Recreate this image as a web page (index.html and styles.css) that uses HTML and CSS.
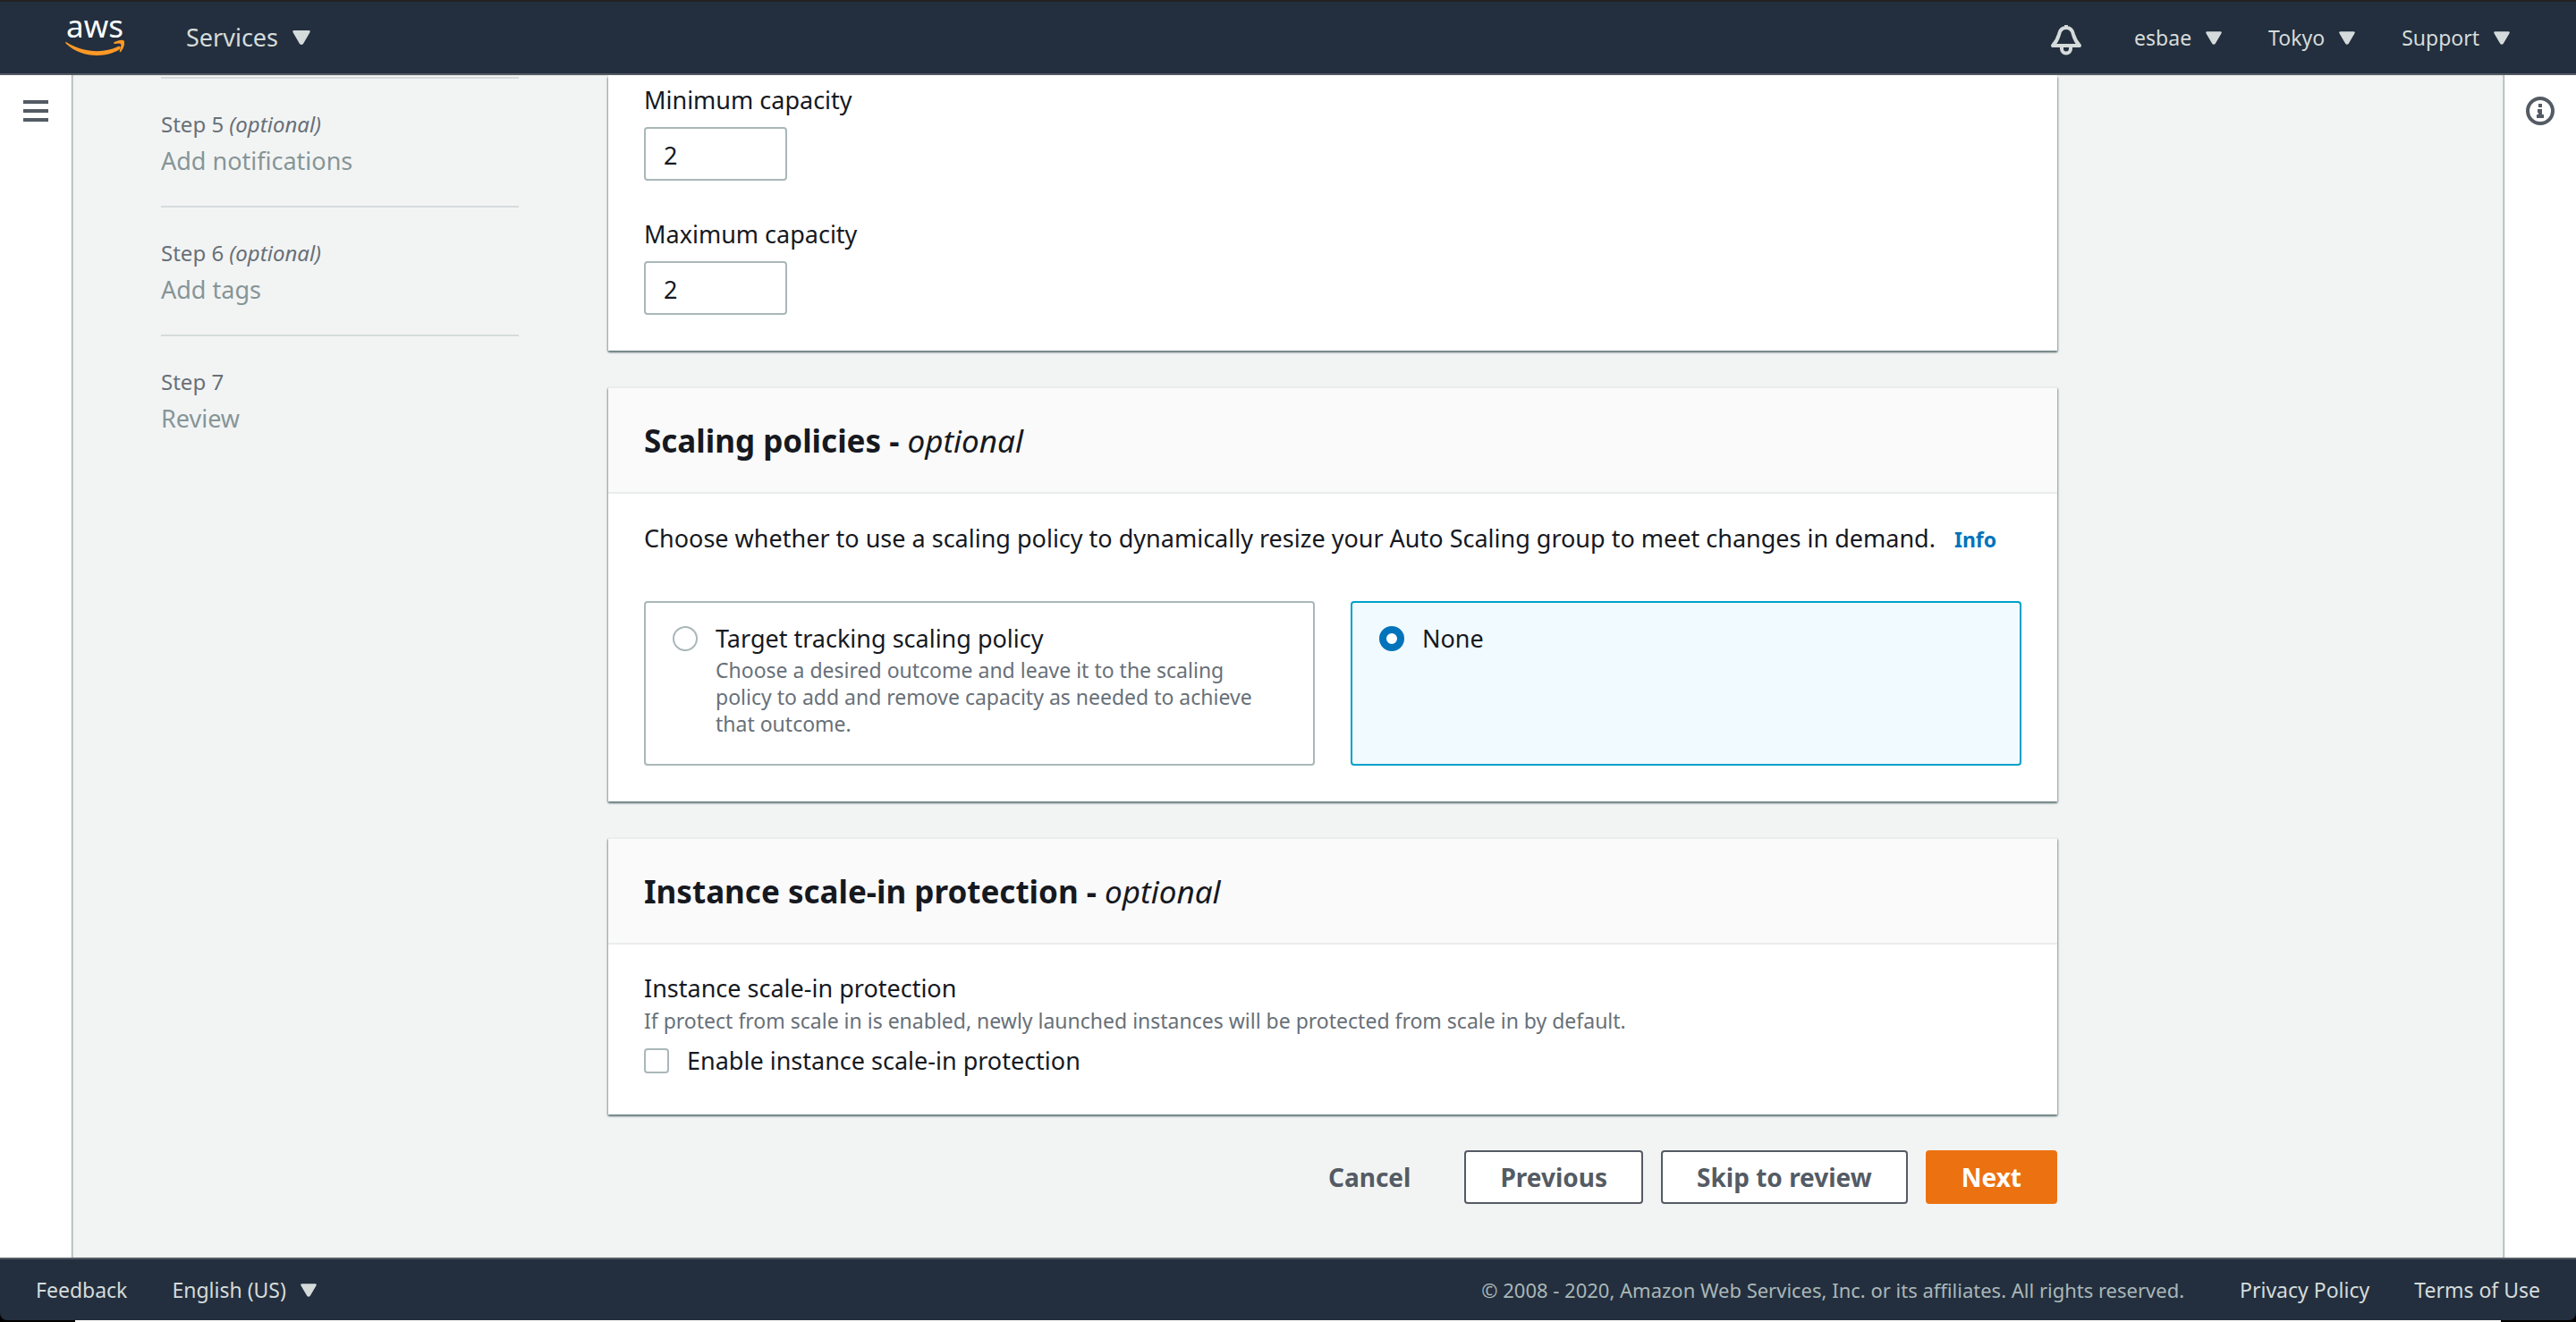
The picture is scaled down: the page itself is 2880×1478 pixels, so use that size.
FILE: index.html
```html
<!DOCTYPE html>
<html lang="en">
<head>
<meta charset="utf-8">
<meta name="viewport" content="width=device-width, initial-scale=1">
<title>Create Auto Scaling group</title>
<link rel="stylesheet" href="styles.css">
</head>
<body>
<header class="topnav">
  <a class="logo" href="#" aria-label="AWS home">
    <span class="logo-word">aws</span>
    <svg class="logo-smile" viewBox="0 0 66 20" aria-hidden="true"><path d="M1 3C20 15 43 16 59 8c2-1 4 1 2 3C44 22 17 20 1 5c-1-1-1-3 0-2z"/><path d="M55 3q9-4 11-1q1 6-4 12q-2 1-1-2q2-5 1-7q-2-1-7 0q-2-1 0-2z"/></svg>
  </a>
  <button class="menu menu-lg" type="button">Services <svg class="caret" viewBox="0 0 20 16" aria-hidden="true"><path d="M2 0h16q3 0 1 3l-7 12q-2 2-4 0L1 3q-2-3 1-3z"/></svg></button>
  <div class="topnav-right">
    <button class="bell" type="button" aria-label="Notifications"><svg viewBox="0 0 36 36" aria-hidden="true"><path d="M18 2v3M3 25h30c-5-5-6-9-7-12.500C25 7.500 22 5 18 5s-7 2.500-8 7.500C9 16 8 20 3 25zM13 26v2.500a5 5 0 0 0 10 0V26"/></svg></button>
    <button class="menu" type="button">esbae <svg class="caret" viewBox="0 0 20 16" aria-hidden="true"><path d="M2 0h16q3 0 1 3l-7 12q-2 2-4 0L1 3q-2-3 1-3z"/></svg></button>
    <button class="menu" type="button">Tokyo <svg class="caret" viewBox="0 0 20 16" aria-hidden="true"><path d="M2 0h16q3 0 1 3l-7 12q-2 2-4 0L1 3q-2-3 1-3z"/></svg></button>
    <button class="menu" type="button">Support <svg class="caret" viewBox="0 0 20 16" aria-hidden="true"><path d="M2 0h16q3 0 1 3l-7 12q-2 2-4 0L1 3q-2-3 1-3z"/></svg></button>
  </div>
</header>
<div class="workspace">
  <aside class="rail">
    <button class="rail-button" type="button" aria-label="Open navigation"><svg viewBox="0 0 32 32" aria-hidden="true"><path d="M2 6h28M2 16h28M2 26h28" stroke-width="4"/></svg></button>
  </aside>
  <main class="wizard">
    <nav class="steps" aria-label="Steps">
      <ol class="step-list">
        <li class="step"><span class="step-no">Step 5 <i>(optional)</i></span><span class="step-name">Add notifications</span></li>
        <li class="step"><span class="step-no">Step 6 <i>(optional)</i></span><span class="step-name">Add tags</span></li>
        <li class="step"><span class="step-no">Step 7</span><span class="step-name">Review</span></li>
      </ol>
    </nav>
    <form class="form">
      <section class="card card-continued">
        <div class="field">
          <label class="label" for="min">Minimum capacity</label>
          <input class="input" id="min" type="text" inputmode="numeric" value="2">
        </div>
        <div class="field">
          <label class="label" for="max">Maximum capacity</label>
          <input class="input" id="max" type="text" inputmode="numeric" value="2">
        </div>
      </section>
      <section class="card">
        <h2 class="card-title">Scaling policies - <i>optional</i></h2>
        <div class="card-body">
          <p class="lead">Choose whether to use a scaling policy to dynamically resize your Auto Scaling group to meet changes in demand. <a class="info" href="#">Info</a></p>
          <div class="tiles">
            <label class="tile">
              <input class="radio" type="radio" name="policy">
              <span class="tile-text"><span class="tile-name">Target tracking scaling policy</span><span class="hint">Choose a desired outcome and leave it to the scaling policy to add and remove capacity as needed to achieve that outcome.</span></span>
            </label>
            <label class="tile tile-selected">
              <input class="radio" type="radio" name="policy" checked>
              <span class="tile-text"><span class="tile-name">None</span></span>
            </label>
          </div>
        </div>
      </section>
      <section class="card">
        <h2 class="card-title">Instance scale-in protection - <i>optional</i></h2>
        <div class="card-body">
          <div class="protection-name">Instance scale-in protection</div>
          <div class="hint">If protect from scale in is enabled, newly launched instances will be protected from scale in by default.</div>
          <label class="check"><input class="checkbox" type="checkbox">Enable instance scale-in protection</label>
        </div>
      </section>
      <div class="actions">
        <button class="btn btn-link" type="button">Cancel</button>
        <button class="btn" type="button">Previous</button>
        <button class="btn" type="button">Skip to review</button>
        <button class="btn btn-primary" type="button">Next</button>
      </div>
    </form>
  </main>
  <aside class="rail">
    <button class="rail-button" type="button" aria-label="Info"><svg viewBox="0 0 32 32" aria-hidden="true"><circle cx="16" cy="16" r="14" stroke-width="4"/><path d="M16 8v4M13 16h5M16 14v8M12 22h8" stroke-width="4"/></svg></button>
  </aside>
</div>
<div class="footer-edge">
  <footer class="footer">
    <a class="footer-link" href="#">Feedback</a>
    <button class="menu" type="button">English (US) <svg class="caret" viewBox="0 0 20 16" aria-hidden="true"><path d="M2 0h16q3 0 1 3l-7 12q-2 2-4 0L1 3q-2-3 1-3z"/></svg></button>
    <span class="copyright">© 2008 - 2020, Amazon Web Services, Inc. or its affiliates. All rights reserved.</span>
    <a class="footer-link" href="#">Privacy Policy</a>
    <a class="footer-link" href="#">Terms of Use</a>
  </footer>
</div>
</body>
</html>
```
FILE: styles.css
```css
* { box-sizing: border-box; }
body {
  margin: 0;
  min-height: 100vh;
  display: flex;
  flex-direction: column;
  background: #fff;
  color: #16191f;
  font-family: "Noto Sans", sans-serif;
  font-size: 27px;
  line-height: 42px;
}
button { font: inherit; margin: 0; padding: 0; border: 0; background: none; color: inherit; }
a { text-decoration: none; color: inherit; }
p, h2, ol { margin: 0; padding: 0; }

.topnav {
  display: flex;
  align-items: center;
  height: 84px;
  padding: 0 74px 0 72px;
  background: #232f3e;
  border-top: 2px solid #222;
  border-bottom: 2px solid #545b64;
  color: #d5dbdb;
}
.logo { display: flex; flex-direction: column; align-items: center; gap: 4px; width: 68px; margin-right: 68px; padding-bottom: 2px; }
.logo-word { color: #fff; font-size: 35px; line-height: 22px; }
.logo-smile { width: 66px; height: 20px; fill: #ff9926; }
.menu { display: flex; align-items: center; gap: 16px; font-size: 23px; line-height: 32px; white-space: nowrap; }
.menu-lg { font-size: 27px; }
.caret { width: 18px; height: 15px; fill: currentColor; }
.menu-lg .caret { width: 20px; height: 16px; }
.topnav-right { display: flex; align-items: center; gap: 52px; margin-left: auto; }
.bell { display: flex; margin-right: 6px; padding-top: 4px; }
.bell svg { width: 36px; height: 36px; fill: none; stroke: currentColor; stroke-width: 4; stroke-linejoin: round; }

.workspace { display: flex; flex: 1; }
.rail { flex: 0 0 80px; padding-top: 24px; background: #fff; }
.rail-button { display: flex; margin: 0 auto; }
.rail-button svg { width: 32px; height: 32px; fill: none; stroke: #545b64; }
.wizard {
  flex: 1;
  display: flex;
  gap: 100px;
  padding: 2px 500px 60px 100px;
  background: #f2f4f4;
  box-shadow: inset 2px 0 2px -1px #879596, inset -2px 0 2px -1px #879596;
}
.steps { flex: 0 0 400px; }
.step-list { list-style: none; }
.step { display: flex; flex-direction: column; height: 144px; padding-top: 31px; border-top: 2px solid #d5dbdb; }
.step-no { font-size: 24px; line-height: 40px; color: #687078; }
.step-name { line-height: 42px; color: #879596; }

.form { flex: 1; display: flex; flex-direction: column; gap: 40px; margin-top: -2px; }
.card {
  background: #fff;
  border-top: 2px solid #eaeded;
  box-shadow: 0 2px 2px #687b7c, 2px 2px 2px -1px #aab7b8, -2px 2px 2px -1px #aab7b8;
}
.card-continued { display: flex; flex-direction: column; gap: 40px; padding: 8px 40px 40px; border-top: 0; }
.field { display: flex; flex-direction: column; gap: 10px; }
.label { line-height: 40px; }
.input {
  width: 160px;
  height: 60px;
  padding: 6px 20px 4px;
  border: 2px solid #aab7b8;
  border-radius: 4px;
  background: #fff;
  color: inherit;
  font: inherit;
}
.card-title { padding: 37px 40px 35px; border-bottom: 2px solid #eaeded; background: #fafafa; font-size: 35px; line-height: 44px; font-weight: 700; }
.card-title i { font-weight: 400; }
.card-body { padding: 28px 40px 40px; }
.lead { line-height: 44px; }
.info { margin-left: 14px; font-size: 23px; line-height: 30px; font-weight: 700; color: #0073bb; }
.tiles { display: grid; grid-template-columns: 1fr 1fr; gap: 40px; margin-top: 48px; }
.tile { display: flex; gap: 20px; min-height: 184px; padding: 24px 50px 24px 30px; border: 2px solid #aab7b8; border-radius: 4px; }
.tile-selected { border-color: #00a1c9; background: #f1faff; }
.tile-text { display: flex; flex-direction: column; gap: 4px; }
.tile-name { line-height: 32px; }
.hint { font-size: 23px; line-height: 30px; color: #687078; }
.radio, .checkbox { appearance: none; flex: none; width: 28px; height: 28px; margin: 0; border: 2px solid #aab7b8; background: #fff; }
.radio { margin-top: 2px; border-radius: 50%; }
.radio:checked { border: 8px solid #0073bb; }
.checkbox { border-radius: 4px; }
.check { display: flex; align-items: center; gap: 20px; margin-top: 10px; line-height: 40px; }

.actions { display: flex; justify-content: flex-end; gap: 20px; }
.btn { height: 60px; padding: 0 38px; border: 2px solid #545b64; border-radius: 4px; background: #fff; color: #545b64; font-size: 28px; font-weight: 700; }
.btn-link { border-color: transparent; background: none; }
.btn-primary { border-color: #ec7211; background: #ec7211; color: #fff; }

.footer-edge {
  padding-bottom: 2px;
  background: linear-gradient(90deg, #000 84px, #fff 84px calc(100% - 84px), #000 calc(100% - 84px));
}
.footer {
  display: flex;
  align-items: center;
  height: 70px;
  padding: 0 40px;
  gap: 50px;
  background: #232f3e;
  border-top: 2px solid #545b64;
  border-radius: 0 0 8px 8px;
  color: #d5dbdb;
  font-size: 23px;
}
.copyright { margin-left: auto; margin-right: 12px; color: #aab7b8; font-size: 22px; }
```
